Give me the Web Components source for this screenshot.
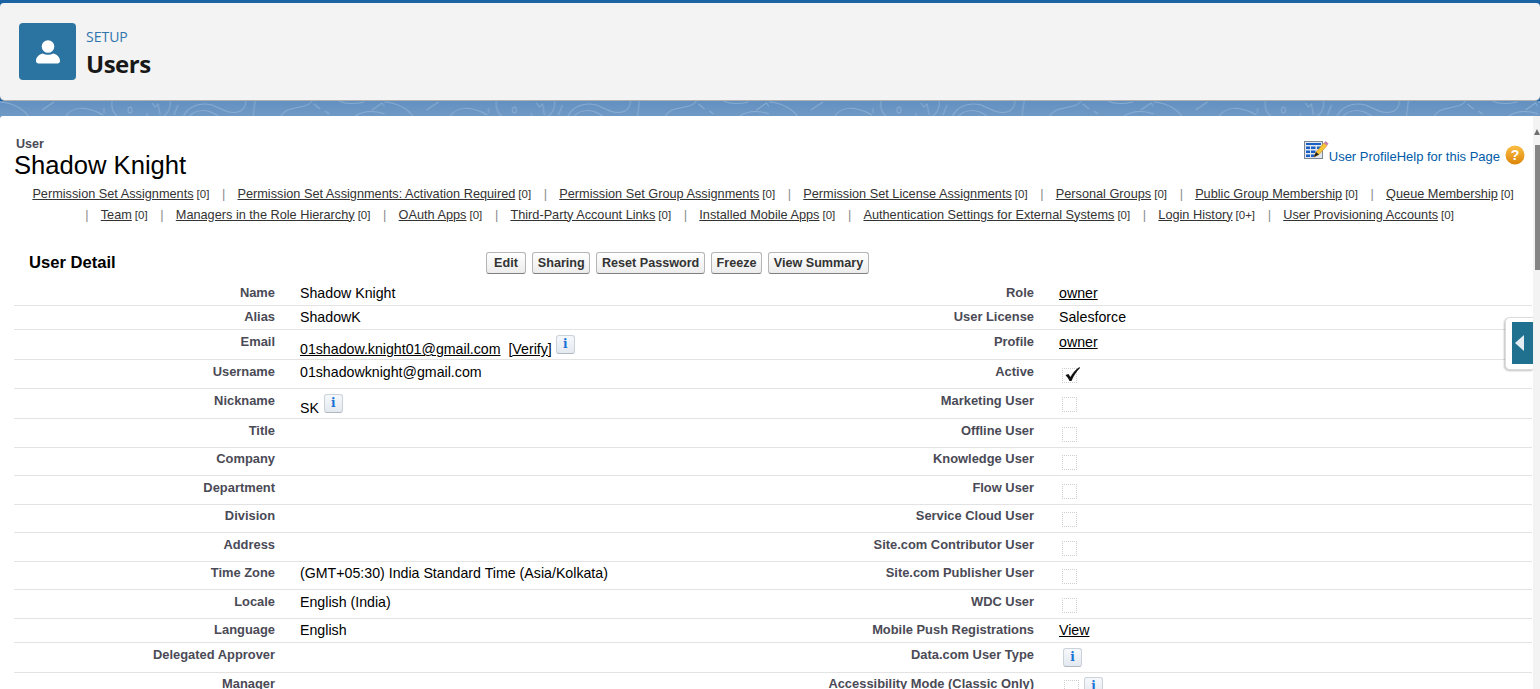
<!DOCTYPE html>
<html>
<head>
<meta charset="utf-8">
<title>Users</title>
<style>
  html, body { margin: 0; height: 689px; overflow: hidden; }
  body { background: #6b95c3; font-family: "Liberation Sans", Arial, sans-serif; }
</style>
</head>
<body>
<setup-header></setup-header>
<pattern-strip></pattern-strip>
<page-panel>
  <user-title></user-title>
  <related-list>
    <related-item name="Permission Set Assignments" count="[0]" first></related-item>
    <related-item name="Permission Set Assignments: Activation Required" count="[0]"></related-item>
    <related-item name="Permission Set Group Assignments" count="[0]"></related-item>
    <related-item name="Permission Set License Assignments" count="[0]"></related-item>
    <related-item name="Personal Groups" count="[0]"></related-item>
    <related-item name="Public Group Membership" count="[0]"></related-item>
    <related-item name="Queue Membership" count="[0]"></related-item>
    <related-item name="Team" count="[0]" style="margin-left:-16px"></related-item>
    <related-item name="Managers in the Role Hierarchy" count="[0]"></related-item>
    <related-item name="OAuth Apps" count="[0]"></related-item>
    <related-item name="Third-Party Account Links" count="[0]"></related-item>
    <related-item name="Installed Mobile Apps" count="[0]"></related-item>
    <related-item name="Authentication Settings for External Systems" count="[0]"></related-item>
    <related-item name="Login History" count="[0+]"></related-item>
    <related-item name="User Provisioning Accounts" count="[0]"></related-item>
  </related-list>
  <detail-head>
    <sf-button style="min-width:40px">Edit</sf-button>
    <sf-button>Sharing</sf-button>
    <sf-button>Reset Password</sf-button>
    <sf-button>Freeze</sf-button>
    <sf-button>View Summary</sf-button>
  </detail-head>
  <detail-table>
    <detail-row label="Name" label2="Role" h="24.7"><span slot="a">Shadow Knight</span><sf-link slot="b">owner</sf-link></detail-row>
    <detail-row label="Alias" label2="User License" h="24.7" pad="3"><span slot="a">ShadowK</span><span slot="b">Salesforce</span></detail-row>
    <detail-row label="Email" label2="Profile" h="29.7"><span slot="a"><sf-link>01shadow.knight01@gmail.com</sf-link>&nbsp; [<sf-link>Verify</sf-link>] <info-btn style="margin-left:0"></info-btn></span><sf-link slot="b">owner</sf-link></detail-row>
    <detail-row label="Username" label2="Active" h="28.5"><span slot="a">01shadowknight@gmail.com</span><check-box slot="b" checked></check-box></detail-row>
    <detail-row label="Nickname" label2="Marketing User" h="30.5" pad="4.2"><span slot="a">SK <info-btn></info-btn></span><check-box slot="b"></check-box></detail-row>
    <detail-row label="Title" label2="Offline User" h="28.5"><check-box slot="b"></check-box></detail-row>
    <detail-row label="Company" label2="Knowledge User" h="28.5"><check-box slot="b"></check-box></detail-row>
    <detail-row label="Department" label2="Flow User" h="28.5"><check-box slot="b"></check-box></detail-row>
    <detail-row label="Division" label2="Service Cloud User" h="28.5"><check-box slot="b"></check-box></detail-row>
    <detail-row label="Address" label2="Site.com Contributor User" h="28.5"><check-box slot="b"></check-box></detail-row>
    <detail-row label="Time Zone" label2="Site.com Publisher User" h="28.5"><span slot="a">(GMT+05:30) India Standard Time (Asia/Kolkata)</span><check-box slot="b"></check-box></detail-row>
    <detail-row label="Locale" label2="WDC User" h="28.5"><span slot="a">English (India)</span><check-box slot="b"></check-box></detail-row>
    <detail-row label="Language" label2="Mobile Push Registrations" h="24"><span slot="a">English</span><sf-link slot="b">View</sf-link></detail-row>
    <detail-row label="Delegated Approver" label2="Data.com User Type" h="30" pad="4.2"><info-btn slot="b" indent></info-btn></detail-row>
    <detail-row label="Manager" label2="Accessibility Mode (Classic Only)" h="30"><span slot="b" style="padding-left:2px"><check-box></check-box> <info-btn></info-btn></span></detail-row>
  </detail-table>
  <side-handle></side-handle>
</page-panel>
<script>
class SetupHeader extends HTMLElement {
  connectedCallback() {
    this.attachShadow({ mode: 'open' });
    this.shadowRoot.innerHTML = `
      <style>
        :host { display: block; padding-top: 3px; background: #1c63a4; }
        .card {
          display: flex;
          align-items: flex-start;
          height: 98px;
          box-sizing: border-box;
          padding: 20px 19px 0;
          gap: 10px;
          background: #f3f3f3;
          border-bottom: 1px solid #b0b0b0;
          border-radius: 4px 4px 5px 5px;
        }
        .icon {
          width: 57px;
          height: 57px;
          background: #2b73a1;
          border-radius: 4px;
          display: flex;
          align-items: center;
          justify-content: center;
        }
        .eyebrow {
          font: 14px/16px "Open Sans", sans-serif;
          color: #2f74ad;
          margin-top: 6px;
        }
        h1 {
          margin: 3px 0 0;
          font: 700 24px/32px "Open Sans", sans-serif;
          color: #181818;
          letter-spacing: -0.5px;
        }
      </style>
      <div class="card">
        <div class="icon">
          <svg width="26" height="26" viewBox="0 0 26 26" fill="#fff">
            <circle cx="13" cy="7.500" r="6.300"/>
            <path d="M1 22c0-4 3-6.500 6.500-7.500 3.500 1.800 7.500 1.800 11 0 3.500 1 6.500 3.500 6.500 7.500 0 1.500-1 2.500-2.500 2.500h-19C2 24.500 1 23.500 1 22z"/>
          </svg>
        </div>
        <div>
          <div class="eyebrow">SETUP</div>
          <h1>Users</h1>
        </div>
      </div>
    `;
  }
}

class PatternStrip extends HTMLElement {
  connectedCallback() {
    this.attachShadow({ mode: 'open' });
    this.shadowRoot.innerHTML = `
      <style>
        :host { display: block; height: 15px; background: linear-gradient(#6290c1, #7099c5); }
        svg { display: block; width: 100%; height: 15px; }
      </style>
      <svg>
        <defs>
          <pattern id="swirl" width="384.500" height="16" patternUnits="userSpaceOnUse">
            <g fill="none" stroke="#a9c3df" stroke-opacity=".5" stroke-width="1">
              <path d="M0 1C12 2 22 6 29 16M42 9L54 1M66 15C72 6 85 4 103 14M104 7V12M112 0C111 6 113 12 118 16"/>
              <ellipse cx="130" cy="9" rx="2" ry="3"/>
              <path d="M147 12V16M152 2L155 6L158 3L160 14M170 0C171 6 168 12 163 16M178 4L174 14"/>
              <path d="M183 16C188 5 200 1 212 4C222 8 228 13 238 11C243 10 246 5 246 0M189 16C195 8 208 7 219 16"/>
              <path d="M255 0L253 16M280 16C285 8 290 8 300 6C306 5 310 3 312 0M314 3L320 8M325 10L329 13"/>
              <path d="M339 0C345 3 355 3 364 1M354 16C362 10 375 8 393 16M372 9L382 2L392 16"/>
            </g>
          </pattern>
        </defs>
        <rect width="100%" height="15" fill="url(#swirl)"/>
      </svg>
    `;
  }
}

class PagePanel extends HTMLElement {
  connectedCallback() {
    this.attachShadow({ mode: 'open' });
    this.shadowRoot.innerHTML = `
      <style>
        :host {
          display: flex;
          position: relative;
          height: 573px;
          background: #fff;
          color: #000;
          border-radius: 3px 0 0 0;
          overflow: hidden;
        }
        .main { flex: 1; min-width: 0; padding: 0 1px 0 14px; }
        .bar { width: 7px; background: #f3f3f3; display: flex; flex-direction: column; align-items: flex-end; }
        .arrow {
          margin-top: 13px;
          width: 0;
          border-left: 3px solid transparent;
          border-right: 3px solid transparent;
          border-bottom: 6px solid #6e6e6e;
        }
        .thumb { margin-top: 10px; width: 5px; height: 125px; background: #858585; }
      </style>
      <div class="main"><slot></slot></div>
      <div class="bar"><div class="arrow"></div><div class="thumb"></div></div>
    `;
  }
}

class UserTitle extends HTMLElement {
  connectedCallback() {
    this.attachShadow({ mode: 'open' });
    this.shadowRoot.innerHTML = `
      <style>
        :host { display: flex; justify-content: space-between; align-items: flex-start; height: 68px; padding-top: 19px; box-sizing: border-box; }
        .type { font-size: 12.6px; line-height: 16px; font-weight: 700; color: #4a4a56; margin: 1px 0 0 2px; }
        .name { font-size: 25.6px; line-height: 27px; color: #000; }
        .help { display: flex; align-items: flex-start; margin: 5px 7px 0 0; font-size: 13px; color: #015ba7; }
        .help span { line-height: 15px; margin-top: 9px; }
        .help .orb { margin: 5px 0 0 5px; }
      </style>
      <div>
        <div class="type">User</div>
        <div class="name">Shadow Knight</div>
      </div>
      <div class="help">
        <svg width="25" height="22" viewBox="0 0 25 22">
          <rect x=".5" y="1.500" width="18" height="17" fill="#dfe6ee" stroke="#7d8791"/>
          <path d="M2 3h15v2H2zM2 6.500h4v2.500H2zM7 6.500h4.500v2.500H7zM13 6.500h4v2.500h-4zM2 10.500h4V13H2zM7 10.500h4.500V13H7zM2 14.500h4V17H2zM7 14.500h4.500V17H7z" fill="#1a5fc4"/>
          <path d="M10 17l2-5 8-9 3 2.500-8 9z" fill="#f5c53a" stroke="#d08a12" stroke-width=".6"/>
          <path d="M10 17l2-5 3 2.500z" fill="#222"/>
          <path d="M20 3l1.500-2 3 2.500-1.500 2z" fill="#c77fb3"/>
        </svg>
        <span>User ProfileHelp for this Page</span>
        <svg class="orb" width="20" height="20" viewBox="0 0 20 20">
          <defs><linearGradient id="o" x1="0" y1="0" x2="0" y2="1"><stop offset="0" stop-color="#fbbf45"/><stop offset="1" stop-color="#dc8508"/></linearGradient></defs>
          <circle cx="10" cy="10" r="9.500" fill="url(#o)"/>
          <text x="10" y="15" text-anchor="middle" font-family="Liberation Sans" font-weight="700" font-size="14" fill="#fff">?</text>
        </svg>
      </div>
    `;
  }
}

class RelatedList extends HTMLElement {
  connectedCallback() {
    this.attachShadow({ mode: 'open' });
    this.shadowRoot.innerHTML = `
      <style>
        :host { display: block; text-align: center; line-height: 20.5px; font-size: 12.72px; height: 67px; }
      </style>
      <slot></slot>
    `;
  }
}

class RelatedItem extends HTMLElement {
  connectedCallback() {
    this.attachShadow({ mode: 'open' });
    const sep = this.hasAttribute('first') ? '' : '<span class="sep">|</span>';
    this.shadowRoot.innerHTML = `
      <style>
        :host { display: inline-block; white-space: nowrap; color: #333; }
        a { color: #333; text-decoration: underline; }
        .count { font-size: 11.5px; margin-left: 3px; }
        .sep { color: #8a8a8a; font-size: 12.72px; margin: 0 12.200px 0 9.100px; }
      </style>
      ${sep}<a>${this.getAttribute('name')}</a><span class="count">${this.getAttribute('count')}</span>
    `;
  }
}

class DetailHead extends HTMLElement {
  connectedCallback() {
    this.attachShadow({ mode: 'open' });
    this.shadowRoot.innerHTML = `
      <style>
        :host { display: flex; align-items: center; height: 23px; margin-bottom: 7px; padding-left: 15px; }
        h2 { margin: 0; width: 457px; font-size: 16.6px; line-height: 23px; color: #000; }
        .buttons { display: flex; gap: 6.3px; }
      </style>
      <h2>User Detail</h2>
      <div class="buttons"><slot></slot></div>
    `;
  }
}

class SfButton extends HTMLElement {
  connectedCallback() {
    this.attachShadow({ mode: 'open' });
    this.shadowRoot.innerHTML = `
      <style>
        :host {
          display: block;
          box-sizing: border-box;
          height: 22px;
          padding: 0 4.500px;
          text-align: center;
          border: 1px solid #b5b5b5;
          border-bottom-color: #7f7f7f;
          border-radius: 3px;
          background: linear-gradient(#fff, #ececec);
          font-size: 12.6px;
          font-weight: 700;
          line-height: 20px;
          color: #333;
        }
      </style>
      <slot></slot>
    `;
  }
}

class DetailTable extends HTMLElement {
  connectedCallback() {
    this.attachShadow({ mode: 'open' });
    this.shadowRoot.innerHTML = `
      <style>:host { display: block; }</style>
      <slot></slot>
    `;
  }
}

class DetailRow extends HTMLElement {
  connectedCallback() {
    this.attachShadow({ mode: 'open' });
    const pad = this.getAttribute('pad') || 3.8;
    this.shadowRoot.innerHTML = `
      <style>
        :host {
          display: grid;
          grid-template-columns: 273px 486px 273px 1fr;
          box-sizing: border-box;
          height: ${this.getAttribute('h')}px;
          border-bottom: 1px solid #e3e3e3;
          font-size: 14.2px;
          color: #000;
        }
        .label {
          padding: ${pad}px 12px 0 0;
          text-align: right;
          font-size: 12.9px;
          font-weight: 700;
          line-height: 15px;
          color: #4a4a56;
          white-space: nowrap;
        }
        .value { padding: ${pad}px 0 0 13px; line-height: 16px; white-space: nowrap; }
      </style>
      <div class="label">${this.getAttribute('label')}</div>
      <div class="value"><slot name="a"></slot></div>
      <div class="label">${this.getAttribute('label2')}</div>
      <div class="value"><slot name="b"></slot></div>
    `;
  }
}

class SfLink extends HTMLElement {
  connectedCallback() {
    this.attachShadow({ mode: 'open' });
    this.shadowRoot.innerHTML = `<style>:host { display: inline; color: #000; text-decoration: underline; }</style><slot></slot>`;
  }
}

class InfoBtn extends HTMLElement {
  connectedCallback() {
    this.attachShadow({ mode: 'open' });
    this.shadowRoot.innerHTML = `
      <style>
        :host {
          display: inline-block;
          overflow: hidden;
          box-sizing: border-box;
          width: 19px;
          height: 19px;
          margin: ${this.hasAttribute('indent') ? '1px 0 0 4px' : '1px 0 0 1px'};
          border: 1px solid #ccd2da;
          border-bottom-color: #b3b8bf;
          border-radius: 3px;
          background: linear-gradient(#f6f9fc, #e3e9f0);
          text-align: center;
          font: 700 12px/16px "DejaVu Serif", serif;
          color: #1a72d4;
        }
      </style>
      i
    `;
  }
}

class CheckBox extends HTMLElement {
  connectedCallback() {
    this.attachShadow({ mode: 'open' });
    const tick = this.hasAttribute('checked')
      ? '<svg width="20" height="20" viewBox="0 0 20 20"><path d="M3.500 12L6.500 11L8.500 14C10.500 10 13 7 17.500 4L18 5C14 9 11.500 13 9.500 18H7.500C6.500 15.500 5 14 3.500 12z" fill="#111"/></svg>'
      : '';
    this.shadowRoot.innerHTML = `
      <style>
        :host {
          display: inline-block;
          position: relative;
          box-sizing: border-box;
          width: 15px;
          height: 15px;
          margin: 4px 0 0 3px;
          border: 1px dotted #cfcfcf;
          vertical-align: top;
        }
        svg { position: absolute; left: -1px; top: -6px; }
      </style>
      ${tick}
    `;
  }
}

class SideHandle extends HTMLElement {
  connectedCallback() {
    this.attachShadow({ mode: 'open' });
    this.shadowRoot.innerHTML = `
      <style>
        :host {
          position: absolute;
          left: 1505px;
          top: 201px;
          width: 28px;
          height: 53px;
          box-sizing: border-box;
          padding: 4px 0 5px 6px;
          background: #fff;
          border: 1px solid #ddd;
          border-right: 0;
          border-radius: 5px 0 0 5px;
          box-shadow: -1px 1px 2px rgba(0,0,0,.25);
        }
        .tab { height: 100%; background: #20708f; display: flex; align-items: center; padding-left: 3px; box-sizing: border-box; }
        i { width: 0; border-right: 9px solid #e4edf1; border-top: 8px solid transparent; border-bottom: 8px solid transparent; }
      </style>
      <div class="tab"><i></i></div>
    `;
  }
}

customElements.define('setup-header', SetupHeader);
customElements.define('pattern-strip', PatternStrip);
customElements.define('page-panel', PagePanel);
customElements.define('user-title', UserTitle);
customElements.define('related-list', RelatedList);
customElements.define('related-item', RelatedItem);
customElements.define('detail-head', DetailHead);
customElements.define('sf-button', SfButton);
customElements.define('detail-table', DetailTable);
customElements.define('detail-row', DetailRow);
customElements.define('sf-link', SfLink);
customElements.define('info-btn', InfoBtn);
customElements.define('check-box', CheckBox);
customElements.define('side-handle', SideHandle);
</script>
</body>
</html>
